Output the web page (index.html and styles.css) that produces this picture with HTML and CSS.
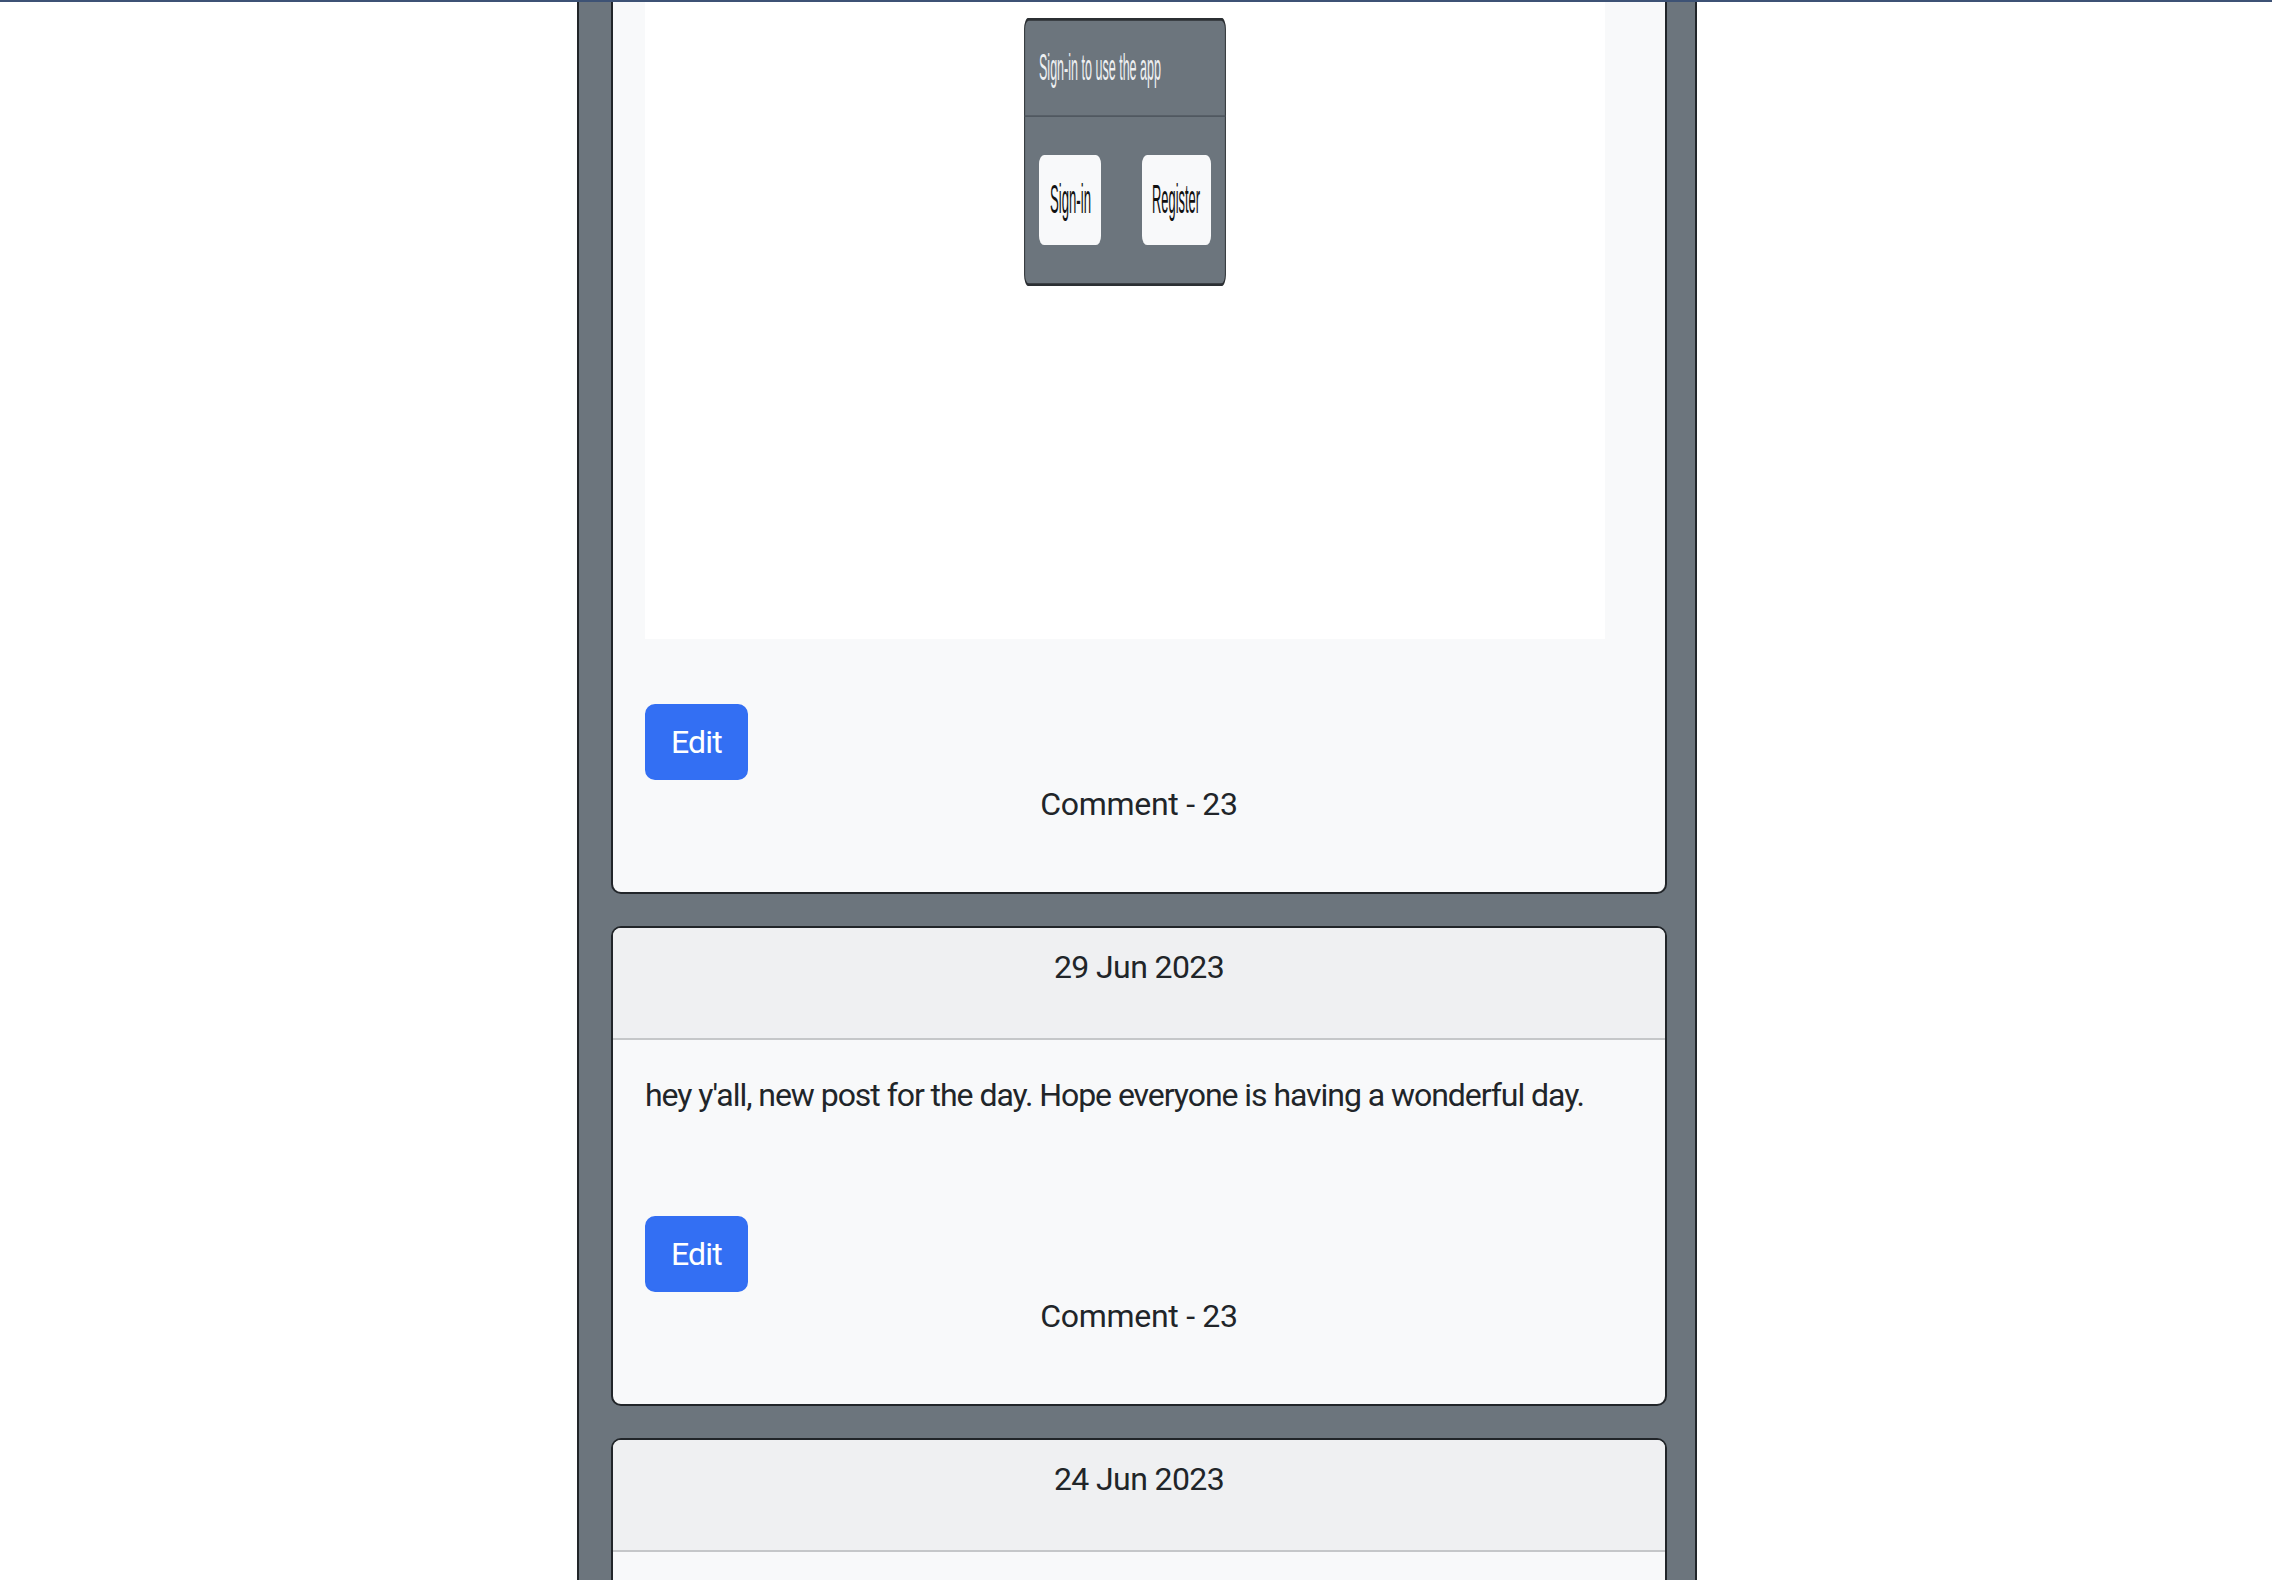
FILE: index.html
```html
<!DOCTYPE html>
<html lang="en">
<head>
<meta charset="utf-8">
<title>Posts</title>
<link rel="stylesheet" href="styles.css">
</head>
<body>
<div class="topbar"></div>
<main class="feed">
  <article class="card card-cut">
    <div class="card-body">
      <div class="post-media">
        <svg class="shot" viewBox="0 0 202 89.33" preserveAspectRatio="none" aria-label="Sign-in dialog screenshot">
          <rect x="0.6" y="0.4" width="200.8" height="88.5" rx="4" ry="3.3" fill="#6c757d" stroke="#2b2f33" stroke-width="1"/>
          <line x1="0.6" y1="32.7" x2="201.4" y2="32.7" stroke="#505860" stroke-width="0.6"/>
          <text x="15" y="20.7" font-family="Liberation Sans, Arial, sans-serif" font-size="12.5" fill="#eef0f2" textLength="122" lengthAdjust="spacingAndGlyphs">Sign-in to use the app</text>
          <rect x="15" y="45.7" width="62" height="30" rx="5" ry="3" fill="#f8f9fa"/>
          <text x="26" y="65" font-family="Liberation Sans, Arial, sans-serif" font-size="13.5" fill="#111" textLength="41" lengthAdjust="spacingAndGlyphs">Sign-in</text>
          <rect x="118" y="45.7" width="69" height="30" rx="5" ry="3" fill="#f8f9fa"/>
          <text x="128" y="65" font-family="Liberation Sans, Arial, sans-serif" font-size="13.5" fill="#111" textLength="48" lengthAdjust="spacingAndGlyphs">Register</text>
        </svg>
      </div>
      <div class="post-footer">
        <button class="btn-edit" type="button">Edit</button>
        <p class="comments">Comment - 23</p>
      </div>
    </div>
  </article>

  <article class="card">
    <header class="card-header"><p>29 Jun 2023</p></header>
    <div class="card-body">
      <p class="post-text">hey y'all, new post for the day. Hope everyone is having a wonderful day.</p>
      <div class="post-footer">
        <button class="btn-edit" type="button">Edit</button>
        <p class="comments">Comment - 23</p>
      </div>
    </div>
  </article>

  <article class="card">
    <header class="card-header"><p>24 Jun 2023</p></header>
    <div class="card-body card-body-tail"></div>
  </article>
</main>
</body>
</html>
```
FILE: styles.css
```css
html, body {
  margin: 0;
  padding: 0;
  background: #ffffff;
}

body {
  font-family: Roboto, "Liberation Sans", Arial, sans-serif;
  font-size: 32px;
  line-height: 48px;
  color: #212529;
  height: 1580px;
  overflow: hidden;
}

.topbar {
  height: 2px;
  background: #3d5275;
}

.feed {
  box-sizing: border-box;
  width: 1120px;
  margin-left: calc(50% - 559px);
  min-height: 1578px;
  background: #6c757d;
  border-left: 2px solid #212529;
  border-right: 2px solid #212529;
  padding: 0 28px 0 32px;
  display: flex;
  flex-direction: column;
  gap: 32px;
}

.card {
  background: #f8f9fa;
  border: 2px solid #212529;
  border-radius: 10px;
  overflow: hidden;
  flex: none;
}

.card-cut {
  border-top: none;
  border-top-left-radius: 0;
  border-top-right-radius: 0;
}

.card-header {
  background: #eff0f2;
  border-bottom: 2px solid #c5c7c9;
  padding: 15px 32px 16px;
  text-align: center;
}

.card-header p {
  margin: 0 0 31px;
  letter-spacing: -0.6px;
}

.card-body {
  padding: 31px 32px 32px;
}

.card-cut .card-body {
  padding-top: 0;
}

.card-body-tail {
  min-height: 120px;
}

.post-media {
  width: 960px;
  height: 637px;
  background: #ffffff;
  display: flex;
  justify-content: center;
  align-items: flex-start;
  padding-top: 16px;
  box-sizing: border-box;
}

.shot {
  display: block;
  width: 202px;
  height: 268px;
}

.post-text {
  margin: 0 0 32px;
  letter-spacing: -1.05px;
}

.post-footer {
  padding-top: 65px;
}

.btn-edit {
  display: block;
  box-sizing: border-box;
  height: 76px;
  padding: 12px 24px;
  border: 2px solid #336ff3;
  border-radius: 10px;
  background: #336ff3;
  color: #ffffff;
  font-family: inherit;
  font-size: 32px;
  line-height: 48px;
  letter-spacing: -0.8px;
  cursor: pointer;
}

.comments {
  margin: 0 0 32px;
  text-align: center;
  letter-spacing: -0.3px;
}
```
